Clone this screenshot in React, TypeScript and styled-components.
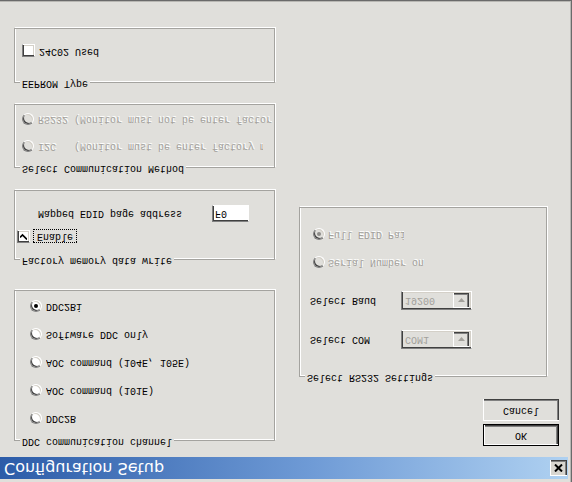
import React from "react";
import styled, { createGlobalStyle } from "styled-components";

const BG = "#e0dfdb";

const Global = createGlobalStyle`
  html, body { margin: 0; padding: 0; background: ${BG}; }
  body { width: 572px; height: 482px; overflow: hidden; }
`;

const Window = styled.div`
  width: 572px;
  height: 482px;
  box-sizing: border-box;
  background: ${BG};
  transform: scaleY(-1);
  display: flex;
  flex-direction: column;
  padding: 3px 4px 0 0;
  box-shadow: inset -1px -1px 0 #6a6a6a, inset -2px -2px 0 #b8b7b3;
  font-family: "Liberation Mono", "DejaVu Sans Mono", monospace;
  font-size: 10px;
  color: #000;
`;

const TitleBar = styled.div`
  height: 22px;
  flex: none;
  display: flex;
  align-items: center;
  justify-content: space-between;
  padding: 0 1px 0 4px;
  background: linear-gradient(90deg, #2c5ca8 0%, #6f9bd6 55%, #afd1f1 100%);
`;

const Title = styled.span`
  font-family: "DejaVu Sans", Verdana, sans-serif;
  font-size: 16px;
  color: #fff;
  line-height: 22px;
  white-space: nowrap;
`;

const CloseButton = styled.div`
  width: 17px;
  height: 16px;
  box-sizing: border-box;
  background: #d8d6d0;
  display: flex;
  align-items: center;
  justify-content: center;
  box-shadow: inset 1px 1px 0 #fff, inset -1px -1px 0 #404040, inset -2px -2px 0 #808080;
`;

const Body = styled.div`
  display: flex;
  padding-left: 14px;
`;

const LeftCol = styled.div`
  width: 261px;
  display: flex;
  flex-direction: column;
`;

const RightCol = styled.div`
  width: 260px;
  margin-left: 24px;
  display: flex;
  flex-direction: column;
  align-items: flex-end;
`;

const Group = styled.div<{ $h: number; $mt: number; $w?: number; $pt?: number; $pl?: number }>`
  position: relative;
  box-sizing: border-box;
  height: ${(p) => p.$h}px;
  width: ${(p) => (p.$w ? `${p.$w}px` : "100%")};
  margin-top: ${(p) => p.$mt}px;
  padding: ${(p) => p.$pt ?? 0}px 0 0 ${(p) => p.$pl ?? 0}px;
  border: 1px solid #a4a39f;
  box-shadow: inset 1px 1px 0 #fff, 1px 1px 0 #fff;
  display: flex;
  flex-direction: column;
  align-self: flex-start;
`;

const Legend = styled.span`
  position: absolute;
  top: -7px;
  left: 5px;
  padding: 0 2px;
  line-height: 12px;
  background: ${BG};
  white-space: nowrap;
`;

const Row = styled.div<{ $h: number; $mt?: number; $pl?: number }>`
  height: ${(p) => p.$h}px;
  margin-top: ${(p) => p.$mt ?? 0}px;
  padding-left: ${(p) => p.$pl ?? 0}px;
  display: flex;
  align-items: center;
  white-space: nowrap;
`;

const RadioDot = styled.span<{ $checked?: boolean; $disabled?: boolean }>`
  flex: none;
  position: relative;
  width: 12px;
  height: 12px;
  box-sizing: border-box;
  border-radius: 50%;
  border: 1px solid;
  border-color: #808080 #fff #fff #808080;
  background: ${(p) => (p.$disabled ? BG : "#fff")};
  box-shadow: inset 1px 1px 0 #404040, inset -1px -1px 0 #d4d0c8;
  &::after {
    content: "";
    display: ${(p) => (p.$checked ? "block" : "none")};
    position: absolute;
    left: 3px;
    top: 3px;
    width: 4px;
    height: 4px;
    border-radius: 50%;
    background: ${(p) => (p.$disabled ? "#8d8c88" : "#000")};
  }
`;

const Label = styled.span<{ $disabled?: boolean; $gap?: number; $clip?: number }>`
  margin-left: ${(p) => p.$gap ?? 4}px;
  line-height: 12px;
  color: ${(p) => (p.$disabled ? "#a3a19c" : "#000")};
  text-shadow: ${(p) => (p.$disabled ? "1px 1px 0 #fff" : "none")};
  white-space: pre;
  overflow: hidden;
  ${(p) => (p.$clip ? `width: ${p.$clip}px;` : "")}
`;

const Box = styled.span`
  flex: none;
  width: 13px;
  height: 13px;
  box-sizing: border-box;
  background: #fff;
  border: 1px solid;
  border-color: #808080 #fff #fff #808080;
  box-shadow: inset 1px 1px 0 #404040, inset -1px -1px 0 #d4d0c8;
  display: flex;
  align-items: center;
  justify-content: center;
`;

const FocusLabel = styled.span`
  margin-left: 3px;
  padding: 0 3px;
  line-height: 12px;
  border: 1px dotted #000;
`;

const FieldLabel = styled.span<{ $w: number }>`
  width: ${(p) => p.$w}px;
  flex: none;
  line-height: 12px;
`;

const TextInput = styled.div`
  width: 37px;
  height: 17px;
  box-sizing: border-box;
  background: #fff;
  border: 1px solid;
  border-color: #808080 #fff #fff #808080;
  box-shadow: inset 1px 1px 0 #404040;
  padding-left: 2px;
  line-height: 15px;
`;

const Combo = styled.div`
  width: 71px;
  height: 19px;
  box-sizing: border-box;
  background: ${BG};
  border: 1px solid;
  border-color: #808080 #fff #fff #808080;
  box-shadow: inset 1px 1px 0 #404040, inset -1px -1px 0 #d4d0c8;
  display: flex;
  align-items: center;
  justify-content: space-between;
  padding: 2px 2px 2px 3px;
`;

const ComboText = styled.span`
  color: #a3a19c;
  line-height: 12px;
`;

const ComboButton = styled.span`
  width: 16px;
  height: 15px;
  box-sizing: border-box;
  background: ${BG};
  box-shadow: inset 1px 1px 0 #fff, inset -1px -1px 0 #404040, inset -2px -2px 0 #808080;
  display: flex;
  align-items: center;
  justify-content: center;
`;

const Button = styled.div<{ $default?: boolean; $mt: number }>`
  width: 76px;
  height: 22px;
  box-sizing: border-box;
  margin-top: ${(p) => p.$mt}px;
  display: flex;
  align-items: center;
  justify-content: center;
  border: ${(p) => (p.$default ? "1px solid #000" : "none")};
  box-shadow: inset 1px 1px 0 #fff, inset -1px -1px 0 #404040, inset -2px -2px 0 #808080;
  line-height: 12px;
`;

const Arrow = () => (
  <svg width="7" height="4" viewBox="0 0 7 4">
    <path d="M0 0h7L3.5 4z" fill="#a3a19c" />
  </svg>
);

const Check = () => (
  <svg width="7" height="7" viewBox="0 0 7 7">
    <path d="M0 2.5l2.5 2.5L7 0.5" stroke="#000" strokeWidth="1.6" fill="none" />
  </svg>
);

const XIcon = () => (
  <svg width="9" height="8" viewBox="0 0 9 8">
    <path d="M1 0.5l7 7M8 0.5l-7 7" stroke="#000" strokeWidth="2" />
  </svg>
);

const Radio = ({ label, checked, disabled, clip, gap }: { label: string; checked?: boolean; disabled?: boolean; clip?: number; gap?: number }) => (
  <>
    <RadioDot $checked={checked} $disabled={disabled} />
    <Label $disabled={disabled} $clip={clip} $gap={gap}>{label}</Label>
  </>
);

const ddcOptions = [
  { label: "DDC2B" },
  { label: "AOC command (101E)" },
  { label: "AOC command (104E, 105E)" },
  { label: "Software DDC only" },
  { label: "DDC2Bi", checked: true },
];

export default function App() {
  return (
    <>
      <Global />
      <Window>
        <TitleBar>
          <Title>Configuration Setup</Title>
          <CloseButton><XIcon /></CloseButton>
        </TitleBar>
        <Body>
          <LeftCol>
            <Group $h={151} $mt={16} $pt={8} $pl={15}>
              <Legend>DDC communication channel</Legend>
              {ddcOptions.map((o) => (
                <Row key={o.label} $h={28}>
                  <Radio label={o.label} checked={o.checked} />
                </Row>
              ))}
            </Group>
            <Group $h={70} $mt={30} $pt={15} $pl={2}>
              <Legend>Factory memory data write</Legend>
              <Row $h={15}>
                <Box><Check /></Box>
                <FocusLabel>Enable</FocusLabel>
              </Row>
              <Row $h={17} $mt={7} $pl={21}>
                <FieldLabel $w={174}>Mapped EDID page address</FieldLabel>
                <TextInput>F0</TextInput>
              </Row>
            </Group>
            <Group $h={64} $mt={22} $pt={7} $pl={7}>
              <Legend>Select Communication Method</Legend>
              <Row $h={27}>
                <Radio label="I2C   (Monitor must be enter factory mode)" disabled clip={225} />
              </Row>
              <Row $h={27}>
                <Radio label="RS232 (Monitor must not be enter factory mode)" disabled clip={234} />
              </Row>
            </Group>
            <Group $h={55} $mt={21} $pt={24} $pl={7}>
              <Legend>EEPROM Type</Legend>
              <Row $h={14}>
                <Box />
                <Label>24C02 Used</Label>
              </Row>
            </Group>
          </LeftCol>
          <RightCol>
            <Button $default $mt={11}>OK</Button>
            <Button $mt={3}>Cancel</Button>
            <Group $h={170} $w={248} $mt={22} $pl={10}>
              <Legend>Select RS232 Settings</Legend>
              <Row $h={19} $mt={27}>
                <FieldLabel $w={91}>Select COM</FieldLabel>
                <Combo>
                  <ComboText>COM1</ComboText>
                  <ComboButton><Arrow /></ComboButton>
                </Combo>
              </Row>
              <Row $h={19} $mt={20}>
                <FieldLabel $w={91}>Select Baud</FieldLabel>
                <Combo>
                  <ComboText>19200</ComboText>
                  <ComboButton><Arrow /></ComboButton>
                </Combo>
              </Row>
              <Row $h={14} $mt={22} $pl={3}>
                <Radio label="Serial Number on" disabled gap={3} />
              </Row>
              <Row $h={14} $mt={14} $pl={3}>
                <Radio label="Full EDID Pair" disabled checked gap={3} clip={76} />
              </Row>
            </Group>
          </RightCol>
        </Body>
      </Window>
    </>
  );
}
